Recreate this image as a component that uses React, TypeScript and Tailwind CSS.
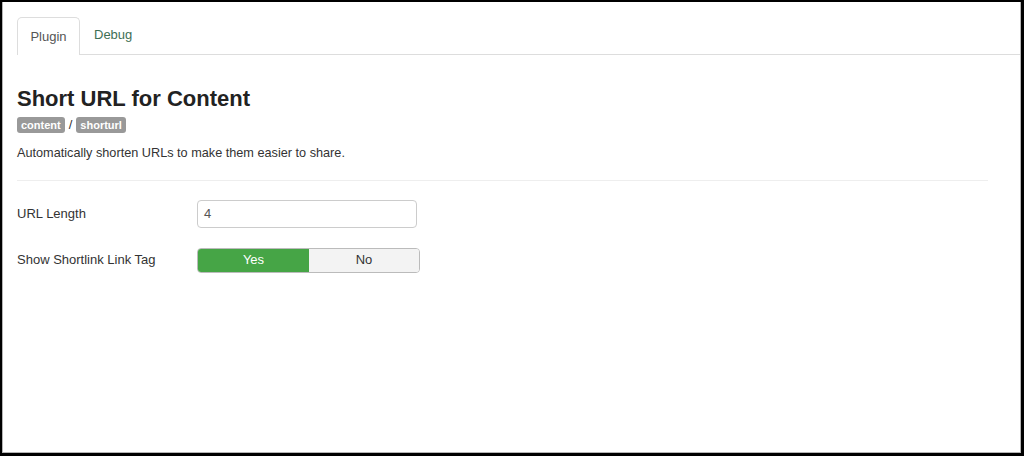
export default function App() {
  return (
    <div
      className="w-[1024px] h-[456px] border-t-2 border-l-2 border-r-[3px] border-b-[3px] border-black bg-white overflow-hidden"
      style={{ fontFamily: '"Liberation Sans", Arial, sans-serif' }}
    >
      <div className="h-full border-l border-r border-b border-[#b5b5b5] pl-[14px] pt-[15px] text-[13px] text-[#333]">
        {/* tabs */}
        <div className="flex items-end h-[38px] border-b border-[#ddd]">
          <div className="h-[38px] w-[63px] -mb-px flex items-center justify-center border border-b-0 border-[#ddd] rounded-t-[5px] bg-white text-[#555]">
            Plugin
          </div>
          <div className="h-[38px] px-[14px] flex items-center text-[#3e6f55]">Debug</div>
        </div>

        <div className="pr-[32px]">
          <h1 className="mt-[31px] text-[22px] leading-[26px] font-bold text-[#222]">Short URL for Content</h1>
          <div className="mt-[3px] flex items-center gap-[4px]">
            <span className="h-[16px] px-[4px] rounded-[3px] bg-[#999] text-white text-[11px] font-bold leading-[16px]">content</span>
            <span className="text-[#333]">/</span>
            <span className="h-[16px] px-[4px] rounded-[3px] bg-[#999] text-white text-[11px] font-bold leading-[16px]">shorturl</span>
          </div>
          <p className="mt-[9px] leading-[18px] text-[12.7px] text-[#333]">Automatically shorten URLs to make them easier to share.</p>
          <div className="mt-[18px] border-t border-[#eee]" />

          <div className="mt-[19px] flex items-center">
            <label className="w-[180px] text-[#333]">URL Length</label>
            <div className="w-[220px] h-[28px] border border-[#ccc] rounded-[4px] px-[6px] flex items-center text-[#555]">4</div>
          </div>

          <div className="mt-[20px] flex items-center">
            <label className="w-[180px] text-[#333]">Show Shortlink Link Tag</label>
            <div className="flex h-[25px] w-[223px] rounded-[4px] border border-[#bbb] overflow-hidden">
              <div className="w-[111px] bg-[#46a546] text-white flex items-center justify-center">Yes</div>
              <div className="flex-1 bg-[#f3f3f3] text-[#333] flex items-center justify-center">No</div>
            </div>
          </div>
        </div>
      </div>
    </div>
  );
}
